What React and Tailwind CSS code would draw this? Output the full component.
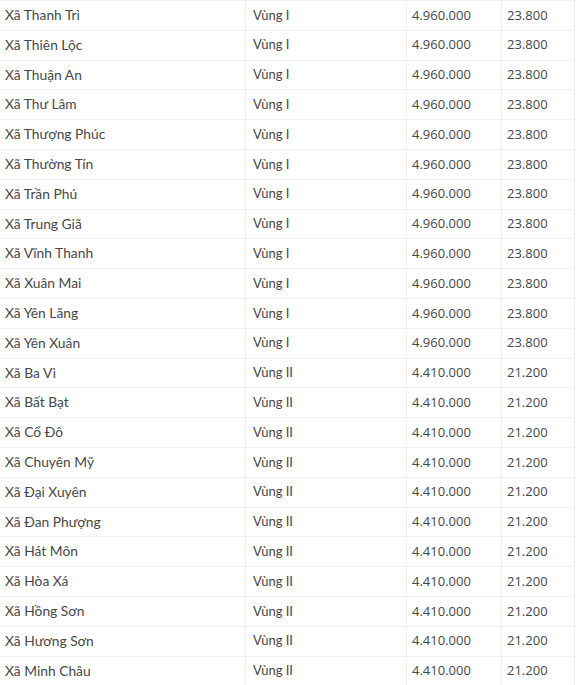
const V1 = ['Thanh Trì', 'Thiên Lộc', 'Thuận An', 'Thư Lâm', 'Thượng Phúc', 'Thường Tín', 'Trần Phú', 'Trung Giã', 'Vĩnh Thanh', 'Xuân Mai', 'Yên Lãng', 'Yên Xuân']
const V2 = ['Ba Vì', 'Bất Bạt', 'Cổ Đô', 'Chuyên Mỹ', 'Đại Xuyên', 'Đan Phượng', 'Hát Môn', 'Hòa Xá', 'Hồng Sơn', 'Hương Sơn', 'Minh Châu']

const ROWS = [
  ...V1.map(n => ({ name: 'Xã ' + n, zone: 'Vùng I', month: '4.960.000', hour: '23.800' })),
  ...V2.map(n => ({ name: 'Xã ' + n, zone: 'Vùng II', month: '4.410.000', hour: '21.200' })),
]

export default function App() {
  return (
    <div className="w-[580px] h-[685px] overflow-hidden bg-white">
      <div className="w-[575px] border-r border-[#efefef]">
        {ROWS.map((r, i) => (
          <div
            key={i}
            className="flex h-[29.8px] border-t border-[#efefef] text-[13px] text-[#474747] items-center"
          >
            <div className="w-[245px] h-full flex items-center pl-[5px] text-[13.8px] font-['Lato','Noto_Sans',sans-serif]">{r.name}</div>
            <div className="w-[161px] h-full flex items-center pl-[7px] border-l border-[#efefef] font-['Lato',sans-serif]">{r.zone}</div>
            <div className="w-[95px] h-full flex items-center pl-[5px] border-l border-[#efefef] font-['Open_Sans',sans-serif]">{r.month}</div>
            <div className="flex-1 h-full flex items-center pl-[5px] border-l border-[#efefef] font-['Open_Sans',sans-serif]">{r.hour}</div>
          </div>
        ))}
      </div>
    </div>
  )
}
